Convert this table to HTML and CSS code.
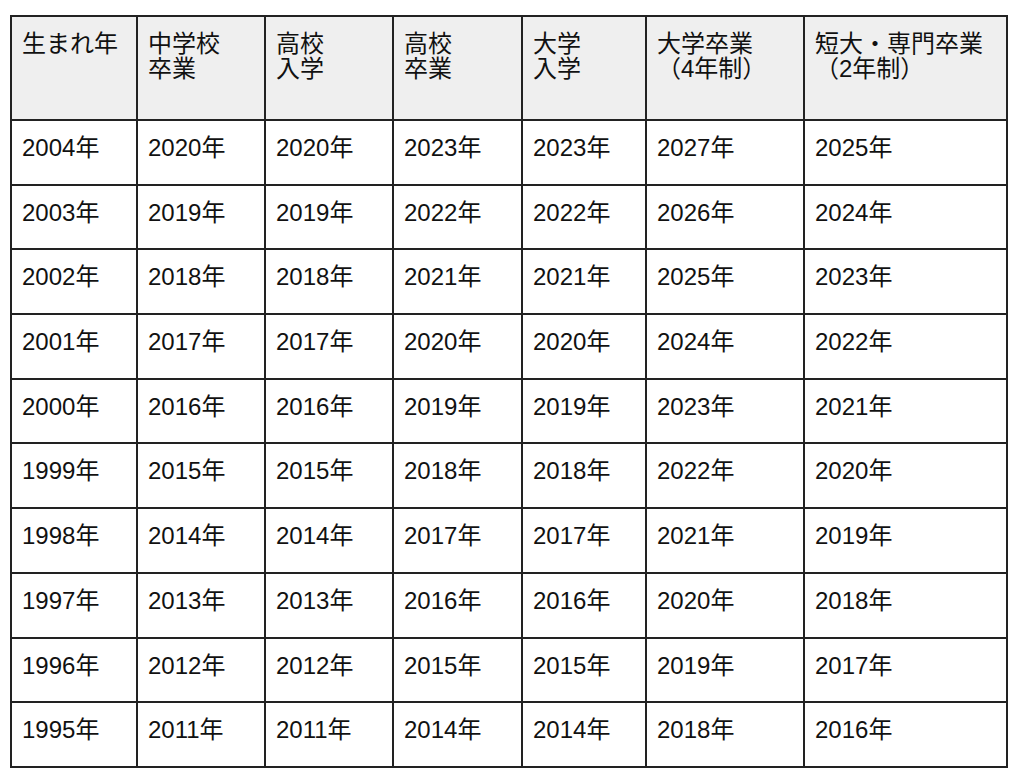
FILE: index.html
```html
<!DOCTYPE html>
<html lang="ja">
<head>
<meta charset="utf-8">
<title>生まれ年早見表</title>
<link rel="stylesheet" href="styles.css">
</head>
<body>
<table class="years">
  <colgroup>
    <col class="c1"><col class="c2"><col class="c3"><col class="c4"><col class="c5"><col class="c6"><col class="c7">
  </colgroup>
  <thead>
    <tr>
      <th>生まれ年</th>
      <th>中学校<br>卒業</th>
      <th>高校<br>入学</th>
      <th>高校<br>卒業</th>
      <th>大学<br>入学</th>
      <th>大学卒業<br>（4年制）</th>
      <th>短大・専門卒業<br>（2年制）</th>
    </tr>
  </thead>
  <tbody>
    <tr><td>2004年</td><td>2020年</td><td>2020年</td><td>2023年</td><td>2023年</td><td>2027年</td><td>2025年</td></tr>
    <tr><td>2003年</td><td>2019年</td><td>2019年</td><td>2022年</td><td>2022年</td><td>2026年</td><td>2024年</td></tr>
    <tr><td>2002年</td><td>2018年</td><td>2018年</td><td>2021年</td><td>2021年</td><td>2025年</td><td>2023年</td></tr>
    <tr><td>2001年</td><td>2017年</td><td>2017年</td><td>2020年</td><td>2020年</td><td>2024年</td><td>2022年</td></tr>
    <tr><td>2000年</td><td>2016年</td><td>2016年</td><td>2019年</td><td>2019年</td><td>2023年</td><td>2021年</td></tr>
    <tr><td>1999年</td><td>2015年</td><td>2015年</td><td>2018年</td><td>2018年</td><td>2022年</td><td>2020年</td></tr>
    <tr><td>1998年</td><td>2014年</td><td>2014年</td><td>2017年</td><td>2017年</td><td>2021年</td><td>2019年</td></tr>
    <tr><td>1997年</td><td>2013年</td><td>2013年</td><td>2016年</td><td>2016年</td><td>2020年</td><td>2018年</td></tr>
    <tr><td>1996年</td><td>2012年</td><td>2012年</td><td>2015年</td><td>2015年</td><td>2019年</td><td>2017年</td></tr>
    <tr><td>1995年</td><td>2011年</td><td>2011年</td><td>2014年</td><td>2014年</td><td>2018年</td><td>2016年</td></tr>
  </tbody>
</table>
</body>
</html>
```
FILE: styles.css
```css
html, body {
  margin: 0;
  padding: 0;
  background: #ffffff;
}

body {
  font-family: "Liberation Sans", "Noto Sans CJK JP", sans-serif;
  color: #111111;
}

.years {
  margin: 15px 0 0 10px;
  width: 998px;
  table-layout: fixed;
  border-collapse: separate;
  border-spacing: 0;
  border-right: 2px solid #222222;
  border-bottom: 2px solid #222222;
  font-size: 24px;
  line-height: 25px;
}

.c1 { width: 126px; }
.c2 { width: 128px; }
.c3 { width: 128px; }
.c4 { width: 129px; }
.c5 { width: 124px; }
.c6 { width: 158px; }
.c7 { width: 203px; }

.years th,
.years td {
  box-sizing: border-box;
  border-left: 2px solid #222222;
  border-top: 2px solid #222222;
  padding: 14px 6px 0 10px;
  text-align: left;
  vertical-align: top;
  font-weight: normal;
  white-space: nowrap;
}

.years th {
  height: 104px;
  background: #efefef;
}

.years td {
  height: 64.7px;
}
```
